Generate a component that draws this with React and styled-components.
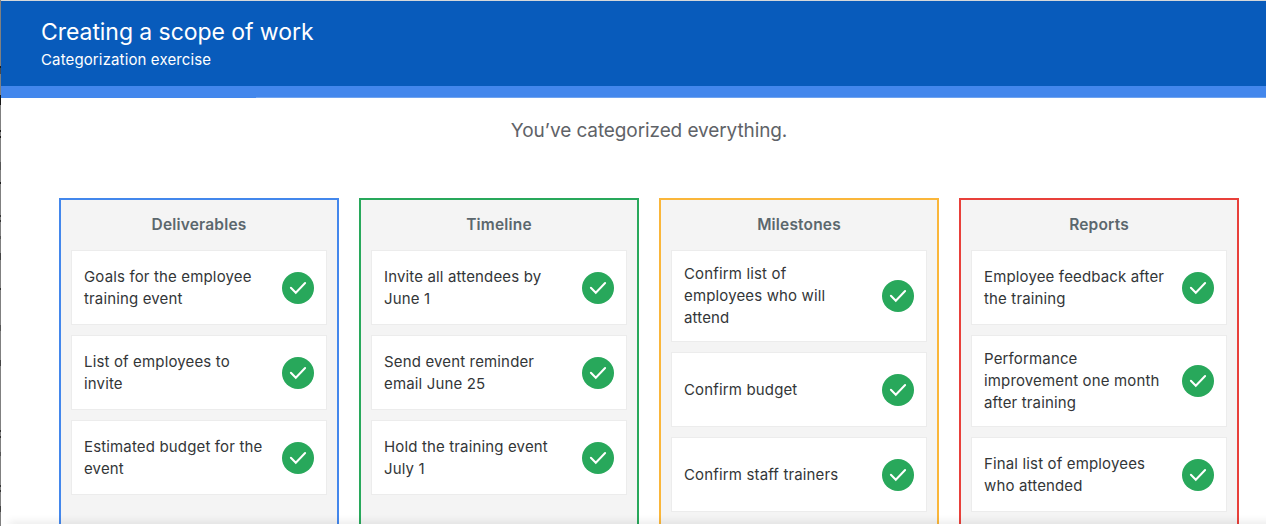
import React from "react";
import styled, { createGlobalStyle } from "styled-components";

const GlobalStyle = createGlobalStyle`
  *, *::before, *::after { box-sizing: border-box; }
  html, body { margin: 0; padding: 0; background: #fff; overflow: hidden; }
  body { font-family: Inter, "Liberation Sans", sans-serif; }
`;

const Window = styled.div`
  display: grid;
  grid-template-columns: 1px 1fr;
  height: 526px;
  overflow: hidden;
`;

const tick = (y, h, color) =>
  `linear-gradient(${color}, ${color}) 0 ${y}px / 1px ${h}px no-repeat`;

const PageEdge = styled.div`
  background:
    ${[
      tick(66, 2, "#1c1c1c"),
      tick(68, 6, "#4a4a4a"),
      tick(95, 10, "#161616"),
      tick(130, 2, "#1c1c1c"),
      tick(136, 2, "#1c1c1c"),
      tick(162, 8, "#555"),
      tick(182, 2, "#1c1c1c"),
      tick(215, 2, "#333"),
      tick(220, 2, "#333"),
      tick(236, 3, "#555"),
      tick(253, 7, "#444"),
      tick(288, 2, "#333"),
      tick(325, 6, "#555"),
      tick(360, 6, "#444"),
      tick(430, 2, "#333"),
      tick(436, 2, "#333"),
      tick(452, 4, "#555"),
      tick(485, 2, "#333"),
      tick(490, 2, "#333"),
      tick(506, 6, "#444"),
    ].join(", ")},
    #808080;
`;

const Screen = styled.div`
  display: flex;
  flex-direction: column;
  min-width: 0;
  height: 526px;
  border-top: 1px solid #d5d8da;
  overflow: hidden;
  background: #fff;
`;

const Header = styled.header`
  flex: none;
  height: 85px;
  padding: 15px 40px 0;
  background: #085bbb;
  color: #fff;
`;

const Title = styled.h1`
  margin: 0;
  font-size: 23px;
  font-weight: 400;
  line-height: 32px;
  letter-spacing: -0.06px;
`;

const Subtitle = styled.p`
  margin: 0;
  font-size: 15px;
  line-height: 24px;
  letter-spacing: 0.13px;
`;

const ProgressBar = styled.div`
  flex: none;
  height: 12px;
  background:
    linear-gradient(#6fa3f0, #6fa3f0) 255px 100% / 100% 1px no-repeat,
    #4387ec;
`;

const Main = styled.main`
  flex: 1;
  min-height: 0;
  display: flex;
  flex-direction: column;
  padding: 19px 27px 0 58px;
`;

const Message = styled.p`
  margin: 0 0 53px;
  font-size: 19px;
  line-height: 28px;
  letter-spacing: -0.1px;
  text-align: center;
  color: #5f6368;
`;

const Board = styled.div`
  flex: 1;
  min-height: 0;
  display: grid;
  grid-template-columns: repeat(4, 280px);
  gap: 20px;
`;

const Column = styled.section`
  display: flex;
  flex-direction: column;
  gap: 10px;
  padding: 0 10px;
  border: 2px solid ${(p) => p.$accent};
  border-bottom: 0;
  background: #f4f4f4;
`;

const ColumnTitle = styled.h2`
  margin: 13px 0 3px;
  font-size: 15.5px;
  font-weight: 600;
  line-height: 24px;
  letter-spacing: 0.17px;
  text-align: center;
  color: #5b676d;
`;

const Card = styled.article`
  flex: none;
  display: flex;
  align-items: center;
  justify-content: space-between;
  min-height: 75px;
  padding: 12px;
  border: 1px solid #ececec;
  background: #fff;
`;

const CardText = styled.p`
  margin: 0;
  font-size: 15px;
  line-height: 22px;
  letter-spacing: 0.15px;
  color: #333638;
  white-space: pre;
`;

const CheckBadge = styled.svg`
  flex: none;
  width: 32px;
  height: 32px;
`;

const Footer = styled.footer`
  position: relative;
  flex: none;
  height: 2px;
  background: #fff;
  box-shadow: 8px 0 9px rgba(0, 0, 0, 0.3);
`;

const columns = [
  {
    title: "Deliverables",
    accent: "#4387ec",
    items: [
      "Goals for the employee\ntraining event",
      "List of employees to\ninvite",
      "Estimated budget for the\nevent",
    ],
  },
  {
    title: "Timeline",
    accent: "#28a85b",
    items: [
      "Invite all attendees by\nJune 1",
      "Send event reminder\nemail June 25",
      "Hold the training event\nJuly 1",
    ],
  },
  {
    title: "Milestones",
    accent: "#fab63a",
    items: [
      "Confirm list of\nemployees who will\nattend",
      "Confirm budget",
      "Confirm staff trainers",
    ],
  },
  {
    title: "Reports",
    accent: "#e8403a",
    items: [
      "Employee feedback after\nthe training",
      "Performance\nimprovement one month\nafter training",
      "Final list of employees\nwho attended",
    ],
  },
];

function Check() {
  return (
    <CheckBadge viewBox="0 0 32 32" aria-label="Correct">
      <circle cx="16" cy="16" r="16" fill="#28a85b" />
      <path
        d="M8.9 15.7 L13.8 20.8 L23.1 11"
        fill="none"
        stroke="#fff"
        strokeWidth="2"
        strokeLinecap="round"
      />
    </CheckBadge>
  );
}

export default function App() {
  return (
    <>
      <GlobalStyle />
      <Window>
        <PageEdge />
        <Screen>
          <Header>
            <Title>Creating a scope of work</Title>
            <Subtitle>Categorization exercise</Subtitle>
          </Header>
          <ProgressBar />
          <Main>
            <Message>You’ve categorized everything.</Message>
            <Board>
              {columns.map((column) => (
                <Column key={column.title} $accent={column.accent}>
                  <ColumnTitle>{column.title}</ColumnTitle>
                  {column.items.map((item) => (
                    <Card key={item}>
                      <CardText>{item}</CardText>
                      <Check />
                    </Card>
                  ))}
                </Column>
              ))}
            </Board>
          </Main>
          <Footer />
        </Screen>
      </Window>
    </>
  );
}
